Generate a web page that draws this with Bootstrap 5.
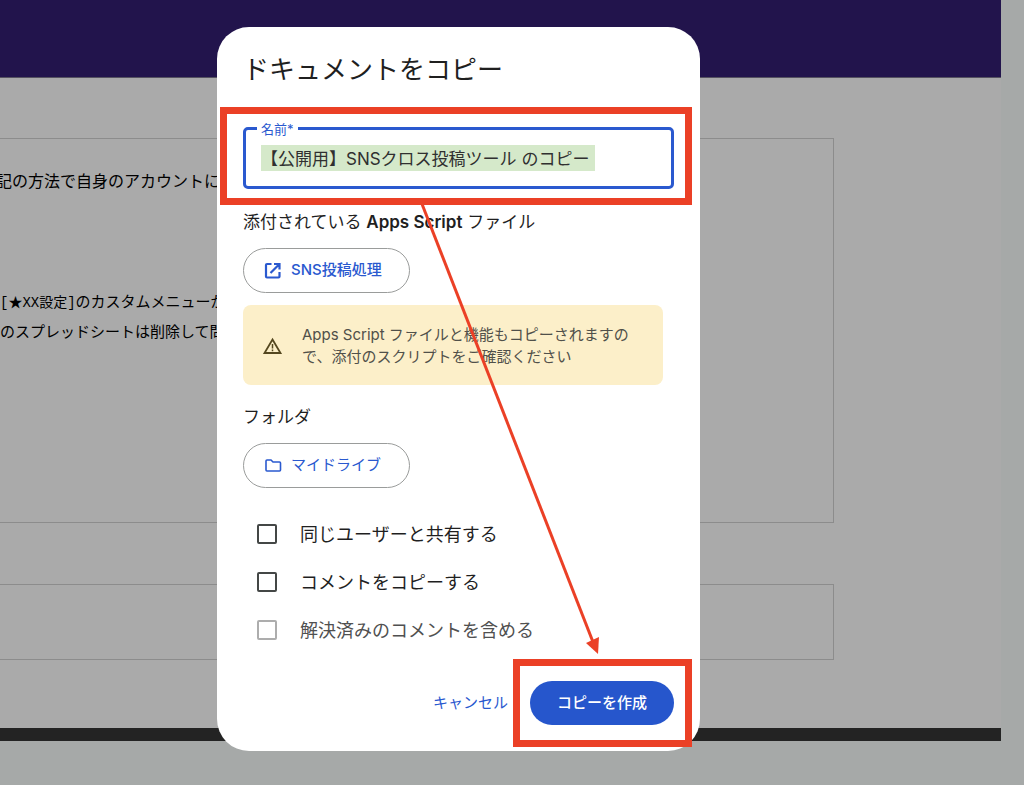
<!DOCTYPE html>
<html lang="ja">
<head>
<meta charset="utf-8">
<meta name="viewport" content="width=device-width, initial-scale=1">
<title>ドキュメントをコピー</title>
<link rel="stylesheet" href="https://cdn.jsdelivr.net/npm/bootstrap@5.3.0/dist/css/bootstrap.min.css">
<style>
  body { background: #a6a9a8; color: #1f1f1f; font-family: Inter, "Noto Sans CJK JP", sans-serif; overflow-x: hidden; }
  .sheet { margin-right: 23px; background: #aaa; }
  .sheet-head { height: 78px; background: #22144c; border-bottom: 1px solid #555260; }
  .sheet-body { padding: 60px 167px 68px 0; }
  .panel { border: 1px solid #8c8c8c; border-left: 0; font-family: "Liberation Mono", "Noto Sans CJK JP", monospace; font-size: 15px; line-height: 30px; color: #000; white-space: nowrap; }
  .panel-notes { height: 385px; padding-top: 29px; margin-bottom: 61px; }
  .panel-notes .intro { font-size: 16px; text-indent: -4px; margin-bottom: 90px; }
  .menu-name { font-size: 14px; }
  .panel-foot { height: 76px; }
  .sheet-end { height: 13px; background: #232323; }

  .overlay { padding: 27px 107px 34px 0; }
  .copy-dialog { width: 483px; padding: 25px 26px 26px; border-radius: 32px; background: #fff; }
  .copy-dialog h1 { font-size: 26px; line-height: 36px; margin-bottom: 39px; font-weight: 400; }
  .name-field { height: 62px; border: 3px solid #2a59cf; border-radius: 5px; padding: 0 15px; margin-bottom: 20px; }
  .name-field label { top: -10px; left: 11px; padding: 0 4px; background: #fff; color: #2a59cf; font-size: 13px; line-height: 18px; }
  .name-field input { width: 334px; height: 26px; border: 0; padding: 0 0 2px; outline: 0; background: #d5e9ca; color: #303030; font-size: 17px; }
  .copy-dialog h2 { font-size: 17px; line-height: 26px; margin-bottom: 13px; font-weight: 400; }
  .copy-dialog h2 b { font-weight: 600; }
  .btn-chip { height: 45px; width: 167px; border: 1px solid #9a9c9b; border-radius: 23px; padding: 0 20px; gap: 9px; color: #2a59cf; font-size: 15px; font-weight: 500; }
  .btn-chip:hover { color: #2a59cf; background: #f2f6ff; border-color: #9a9c9b; }
  .btn-script { margin-bottom: 12px; }
  .btn-folder { margin-bottom: 22px; font-weight: 400; }
  .notice { width: 420px; height: 80px; border-radius: 8px; background: #fcefc9; color: #50504a; font-size: 15px; line-height: 22px; padding: 2px 19px 0; gap: 19px; margin-bottom: 19px; }
  .option { height: 48px; gap: 23px; padding-left: 14px; font-size: 18px; }
  .option input { appearance: none; width: 20px; height: 20px; margin: 0; border: 2px solid #444746; border-radius: 2px; background: #fff; }
  .option input:checked { background: #2656cc; }
  .option input:disabled { border-color: #adadad; }
  .option-off { color: #505050; }
  .actions { gap: 22px; margin-top: 27px; }
  .btn-cancel { color: #2a59cf; font-size: 15px; padding: 0; border: 0; }
  .btn-create { width: 144px; height: 44px; border: 0; border-radius: 22px; background: #2656cc; color: #fff; font-size: 15px; font-weight: 500; padding: 0; }
  .markup { pointer-events: none; }
</style>
</head>
<body>
<div class="sheet">
  <header class="sheet-head"></header>
  <main class="sheet-body">
    <section class="panel panel-notes">
      <p class="intro">記の方法で自身のアカウントに</p>
      <p class="mb-0"><span class="menu-name">[★XX設定]</span>のカスタムメニューが</p>
      <p class="mb-0">のスプレッドシートは削除して問</p>
    </section>
    <section class="panel panel-foot"></section>
  </main>
  <footer class="sheet-end"></footer>
</div>

<div class="overlay position-absolute top-0 start-0 w-100 d-flex justify-content-center">
  <form class="copy-dialog position-relative" role="dialog" aria-labelledby="dialog-title">
    <h1 id="dialog-title">ドキュメントをコピー</h1>

    <div class="name-field position-relative d-flex align-items-center">
      <label for="doc-name" class="position-absolute">名前*</label>
      <input id="doc-name" type="text" value="【公開用】SNSクロス投稿ツール のコピー">
    </div>

    <h2>添付されている <b>Apps Script</b> ファイル</h2>
    <button type="button" class="btn btn-chip btn-script d-flex align-items-center">
      <svg width="18" height="18" viewBox="0 0 18 18" fill="none" stroke="currentColor" stroke-width="2.200"><path d="M7.500 2H3Q2 2 2 3V14.500Q2 15.500 3 15.500H14.500Q15.500 15.500 15.500 14.500V10M10 2H15.500V7.500M15.500 2L6.500 11"/></svg>
      <span>SNS投稿処理</span>
    </button>

    <div class="notice d-flex align-items-center" role="note">
      <svg class="flex-shrink-0" width="21" height="18" viewBox="0 0 21 18" fill="none" stroke="#54471f" stroke-width="1.800"><path d="M10.500 2.500L18.500 16H2.500Z"/><path d="M10.500 7v4.500M10.500 12.500v1.800" stroke-width="1.500"/></svg>
      <span>Apps Script ファイルと機能もコピーされますの<br>で、添付のスクリプトをご確認ください</span>
    </div>

    <h2>フォルダ</h2>
    <button type="button" class="btn btn-chip btn-folder d-flex align-items-center">
      <svg width="18" height="18" viewBox="0 0 18 18" fill="none" stroke="currentColor" stroke-width="1.600"><path d="M2 4Q2 3 3 3H7L9 5H15.500Q16.500 5 16.500 6V13Q16.500 14 15.500 14H3Q2 14 2 13Z"/></svg>
      <span>マイドライブ</span>
    </button>

    <label class="option d-flex align-items-center"><input type="checkbox"><span>同じユーザーと共有する</span></label>
    <label class="option d-flex align-items-center"><input type="checkbox"><span>コメントをコピーする</span></label>
    <label class="option option-off d-flex align-items-center"><input type="checkbox" disabled><span>解決済みのコメントを含める</span></label>

    <div class="actions d-flex justify-content-end align-items-center">
      <button type="button" class="btn btn-cancel">キャンセル</button>
      <button type="submit" class="btn btn-create">コピーを作成</button>
    </div>

    <!-- Callout frames and the arrow that joins them -->
    <svg class="markup position-absolute top-0 start-0" width="483" height="724" viewBox="0 0 483 724" fill="none" stroke="#eb4026" aria-hidden="true">
      <rect x="6.500" y="83.500" width="465" height="91" stroke-width="7"/>
      <rect x="299.500" y="635.500" width="172" height="81" stroke-width="7"/>
      <path d="M205 177L376 615" stroke-width="3"/>
      <path d="M369 616L382 610L381 627Z" fill="#eb4026" stroke="none"/>
    </svg>
  </form>
</div>
<script src="https://cdn.jsdelivr.net/npm/bootstrap@5.3.0/dist/js/bootstrap.bundle.min.js"></script>
</body>
</html>
